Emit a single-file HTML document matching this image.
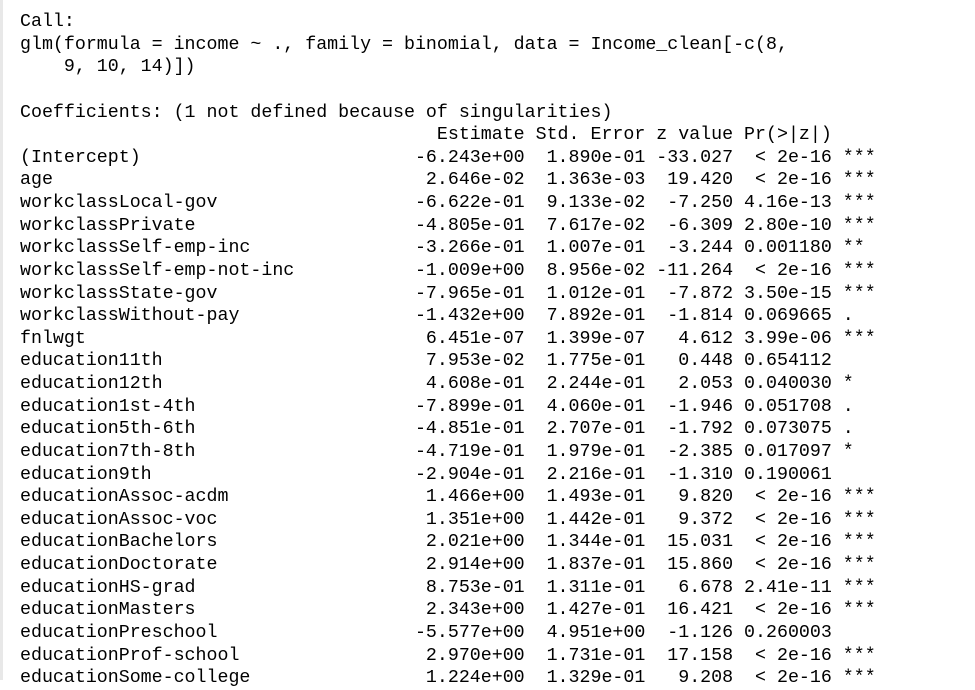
<!DOCTYPE html>
<html><head><style>
body{margin:0;background:#fff;width:975px;height:680px;overflow:hidden;position:relative}
.b{position:absolute;left:0;top:0;width:3px;height:680px;background:#e8e8e8}
pre{position:absolute;left:20px;top:11px;margin:0;font-family:"Liberation Mono",monospace;font-size:18.3px;line-height:22.63px;color:#000}
</style></head><body><div class="b"></div>
<pre>Call:
glm(formula = income ~ ., family = binomial, data = Income_clean[-c(8, 
    9, 10, 14)])

Coefficients: (1 not defined because of singularities)
                                      Estimate Std. Error z value Pr(&gt;|z|)    
(Intercept)                         -6.243e+00  1.890e-01 -33.027  &lt; 2e-16 ***
age                                  2.646e-02  1.363e-03  19.420  &lt; 2e-16 ***
workclassLocal-gov                  -6.622e-01  9.133e-02  -7.250 4.16e-13 ***
workclassPrivate                    -4.805e-01  7.617e-02  -6.309 2.80e-10 ***
workclassSelf-emp-inc               -3.266e-01  1.007e-01  -3.244 0.001180 ** 
workclassSelf-emp-not-inc           -1.009e+00  8.956e-02 -11.264  &lt; 2e-16 ***
workclassState-gov                  -7.965e-01  1.012e-01  -7.872 3.50e-15 ***
workclassWithout-pay                -1.432e+00  7.892e-01  -1.814 0.069665 .  
fnlwgt                               6.451e-07  1.399e-07   4.612 3.99e-06 ***
education11th                        7.953e-02  1.775e-01   0.448 0.654112    
education12th                        4.608e-01  2.244e-01   2.053 0.040030 *  
education1st-4th                    -7.899e-01  4.060e-01  -1.946 0.051708 .  
education5th-6th                    -4.851e-01  2.707e-01  -1.792 0.073075 .  
education7th-8th                    -4.719e-01  1.979e-01  -2.385 0.017097 *  
education9th                        -2.904e-01  2.216e-01  -1.310 0.190061    
educationAssoc-acdm                  1.466e+00  1.493e-01   9.820  &lt; 2e-16 ***
educationAssoc-voc                   1.351e+00  1.442e-01   9.372  &lt; 2e-16 ***
educationBachelors                   2.021e+00  1.344e-01  15.031  &lt; 2e-16 ***
educationDoctorate                   2.914e+00  1.837e-01  15.860  &lt; 2e-16 ***
educationHS-grad                     8.753e-01  1.311e-01   6.678 2.41e-11 ***
educationMasters                     2.343e+00  1.427e-01  16.421  &lt; 2e-16 ***
educationPreschool                  -5.577e+00  4.951e+00  -1.126 0.260003    
educationProf-school                 2.970e+00  1.731e-01  17.158  &lt; 2e-16 ***
educationSome-college                1.224e+00  1.329e-01   9.208  &lt; 2e-16 ***</pre>
</body></html>
